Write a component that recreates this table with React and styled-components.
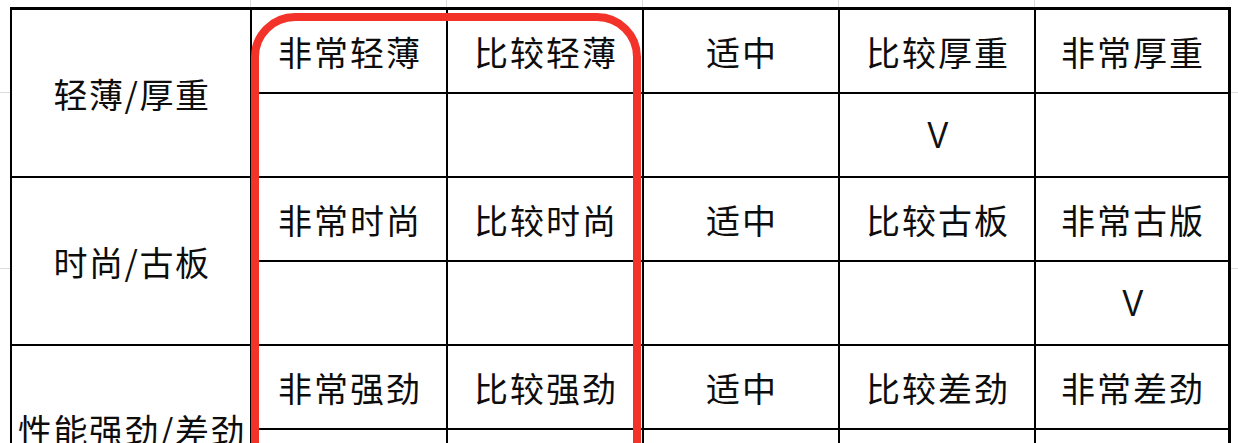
import React from "react";
import styled, { createGlobalStyle } from "styled-components";

// ===== GLOBAL =====
const GlobalStyle = createGlobalStyle`
    html, body {
        margin: 0;
        padding: 0;
        background: #ffffff;
        overflow: hidden;
    }
    body {
        font-family: "Noto Sans CJK SC", "Noto Sans", sans-serif;
        color: #111111;
    }
`;

// ===== STYLED COMPONENTS =====
const Sheet = styled.div`
    position: relative;
    width: 1238px;
    height: 443px;
    overflow: hidden;
    box-sizing: border-box;
    padding: 7px 0 0 10px;
    background-color: #ffffff;
    background-image:
        repeating-linear-gradient(to bottom, transparent 0 92px, #dcdcdc 92px 93px, transparent 93px 176px),
        linear-gradient(to right, transparent 250px, #dcdcdc 250px 251px, transparent 251px 446px, #dcdcdc 446px 447px, transparent 447px 642px, #dcdcdc 642px 643px, transparent 643px 838px, #dcdcdc 838px 839px, transparent 839px 1034px, #dcdcdc 1034px 1035px, transparent 1035px);
    background-size: 100% 100%, 100% 8px;
    background-repeat: no-repeat;
`;

const Table = styled.div`
    display: grid;
    grid-template-columns: 240px 196px 196px 196px 196px 192px;
    grid-auto-rows: 84px;
    width: max-content;
    border-top: 3px solid #000;
    border-left: 2px solid #000;
    border-right: 3px solid #000;
    background: #ffffff;
`;

const Cell = styled.div`
    box-sizing: border-box;
    display: flex;
    align-items: center;
    justify-content: center;
    border-right: ${p => (p.$last ? "none" : "2px solid #000")};
    border-bottom: 2px solid #000;
    font-size: 34px;
    font-weight: 400;
    line-height: 1;
    white-space: nowrap;
    letter-spacing: 2px;
    text-indent: 2px;
    padding-top: 2px;
    color: #0d0d0d;
`;

const LabelCell = styled(Cell)`
    grid-row: span 2;
    overflow: visible;
    letter-spacing: 1.5px;
`;

const Check = styled.span`
    font-family: "Liberation Sans", Arial, sans-serif;
    font-size: 36px;
    font-weight: 400;
    letter-spacing: 0;
    display: inline-block;
    transform: scaleX(0.88);
    color: #111;
`;

const Highlight = styled.div`
    position: absolute;
    left: 251px;
    top: 13px;
    width: 390px;
    height: 600px;
    box-sizing: border-box;
    border: 8px solid #f3322a;
    border-radius: 44px;
    pointer-events: none;
`;

// ===== DATA =====
const groups = [
    { label: "轻薄/厚重", options: ["非常轻薄", "比较轻薄", "适中", "比较厚重", "非常厚重"], pick: 3 },
    { label: "时尚/古板", options: ["非常时尚", "比较时尚", "适中", "比较古板", "非常古版"], pick: 4 },
    { label: "性能强劲/差劲", options: ["非常强劲", "比较强劲", "适中", "比较差劲", "非常差劲"], pick: -1 },
];

// ===== MAIN COMPONENT =====
export default function App() {
    return (
        <>
            <GlobalStyle />
            <Sheet>
                <Table>
                    {groups.map((g, gi) => (
                        <React.Fragment key={gi}>
                            <LabelCell>{g.label}</LabelCell>
                            {g.options.map((o, i) => (
                                <Cell key={o + i} $last={i === 4}>{o}</Cell>
                            ))}
                            {g.options.map((o, i) => (
                                <Cell key={"c" + i} $last={i === 4}>
                                    {i === g.pick && <Check>V</Check>}
                                </Cell>
                            ))}
                        </React.Fragment>
                    ))}
                </Table>
                <Highlight />
            </Sheet>
        </>
    );
}
